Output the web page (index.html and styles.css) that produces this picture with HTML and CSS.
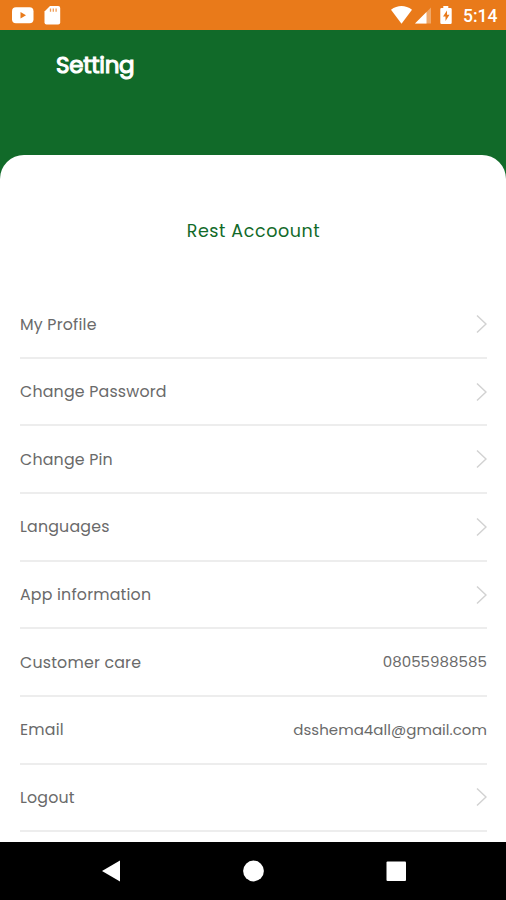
FILE: index.html
```html
<!DOCTYPE html>
<html lang="en">
<head>
<meta charset="utf-8">
<title>Setting</title>
<link rel="stylesheet" href="styles.css">
</head>
<body>
<div class="status">
  <svg class="notices" width="70" height="30" viewBox="0 0 70 30">
    <rect x="12" y="7.3" width="21.5" height="16" rx="4" fill="#fff"/>
    <path d="M20.5 12v6.5l5.5-3.2z" fill="#e97a1a"/>
    <path d="M50 6h8.2a2 2 0 0 1 2 2v14.5a2 2 0 0 1-2 2H46.5a2 2 0 0 1-2-2V11.5z" fill="#fff"/>
    <path d="M50.5 8.5v3.3M53.3 8.5v3.3M56.1 8.5v3.3" stroke="#e97a1a" stroke-opacity=".75" stroke-width="1.3"/>
  </svg>
  <svg class="signals" width="70" height="30" viewBox="0 0 70 30">
    <path d="M1 9.8C7.500 4.800 15.500 4.800 22 9.800L11.500 23.800z" fill="#fff"/>
    <path d="M41 7.500V23.500H25z" fill="#fff" fill-opacity=".35"/>
    <path d="M36.500 12V23.500H25z" fill="#fff"/>
    <path d="M53.300 6h5v2h2.200a1.200 1.200 0 0 1 1.200 1.200v13.600a1.200 1.200 0 0 1-1.200 1.200h-9a1.200 1.200 0 0 1-1.200-1.200V9.200A1.200 1.200 0 0 1 51.500 8h1.800z" fill="#fff"/>
    <path d="M57 10.500l-4 6h2.500V21l4-6.200H57z" fill="#e97a1a"/>
  </svg>
  <span class="time">5:14</span>
</div>
<header><h1>Setting</h1></header>
<main>
  <h2>Rest Accoount</h2>
  <ul>
    <li><span>My Profile</span><svg class="chevron" viewBox="0 0 12 20"><path d="M2 1.500L11 10l-9 8.500"/></svg></li>
    <li><span>Change Password</span><svg class="chevron" viewBox="0 0 12 20"><path d="M2 1.500L11 10l-9 8.500"/></svg></li>
    <li><span>Change Pin</span><svg class="chevron" viewBox="0 0 12 20"><path d="M2 1.500L11 10l-9 8.500"/></svg></li>
    <li><span>Languages</span><svg class="chevron" viewBox="0 0 12 20"><path d="M2 1.500L11 10l-9 8.500"/></svg></li>
    <li><span>App information</span><svg class="chevron" viewBox="0 0 12 20"><path d="M2 1.500L11 10l-9 8.500"/></svg></li>
    <li><span>Customer care</span><span class="value">08055988585</span></li>
    <li><span>Email</span><span class="value">dsshema4all@gmail.com</span></li>
    <li><span>Logout</span><svg class="chevron" viewBox="0 0 12 20"><path d="M2 1.500L11 10l-9 8.500"/></svg></li>
  </ul>
</main>
<nav>
  <svg width="506" height="58" viewBox="0 0 506 58">
    <path d="M102 29l18-10.500v21z"/>
    <circle cx="253.500" cy="29" r="10.400"/>
    <rect x="386.500" y="19.500" width="19.500" height="19.500" rx="1"/>
  </svg>
</nav>
</body>
</html>
```
FILE: styles.css
```css
* { box-sizing: border-box; }
body {
  margin: 0;
  width: 506px;
  height: 900px;
  overflow: hidden;
  display: flex;
  flex-direction: column;
  background: #116a29;
  font-family: Poppins, Inter, sans-serif;
}
.status {
  height: 30px;
  flex: none;
  display: flex;
  align-items: center;
  background: #e97a1a;
  color: #fff;
}
.signals { margin-left: 320px; }
.time {
  margin-left: 3px;
  font: 500 17.500px/30px Roboto, sans-serif;
  padding-top: 2px;
}
header {
  height: 125px;
  flex: none;
  padding: 20px 0 0 56px;
}
h1 {
  margin: 0;
  color: #fff;
  font-size: 23px;
  line-height: 30px;
  font-weight: 400;
  letter-spacing: -0.3px;
  -webkit-text-stroke: 1.100px #fff;
}
main {
  height: 687px;
  flex: none;
  padding: 61px 19px 0 20px;
  background: #fff;
  border-radius: 24px 24px 0 0;
  overflow: hidden;
}
h2 {
  margin: 0 0 45.200px;
  text-align: center;
  color: #116a29;
  font-size: 17.500px;
  line-height: 30px;
  font-weight: 400;
  letter-spacing: 0.600px;
}
ul { margin: 0; padding: 0; list-style: none; }
li {
  height: 67.650px;
  display: flex;
  align-items: center;
  justify-content: space-between;
  border-bottom: 2px solid #ededed;
  color: #6a6a6a;
  font-size: 15.800px;
  letter-spacing: 0.200px;
}
.value {
  font-size: 15px;
  letter-spacing: 0.040px;
  padding-bottom: 1px;
}
.chevron {
  width: 12px;
  height: 20px;
  fill: none;
  stroke: #d2d2d2;
  stroke-width: 1.500;
}
nav { height: 58px; flex: none; background: #000; }
nav svg { display: block; fill: #fff; }
```
